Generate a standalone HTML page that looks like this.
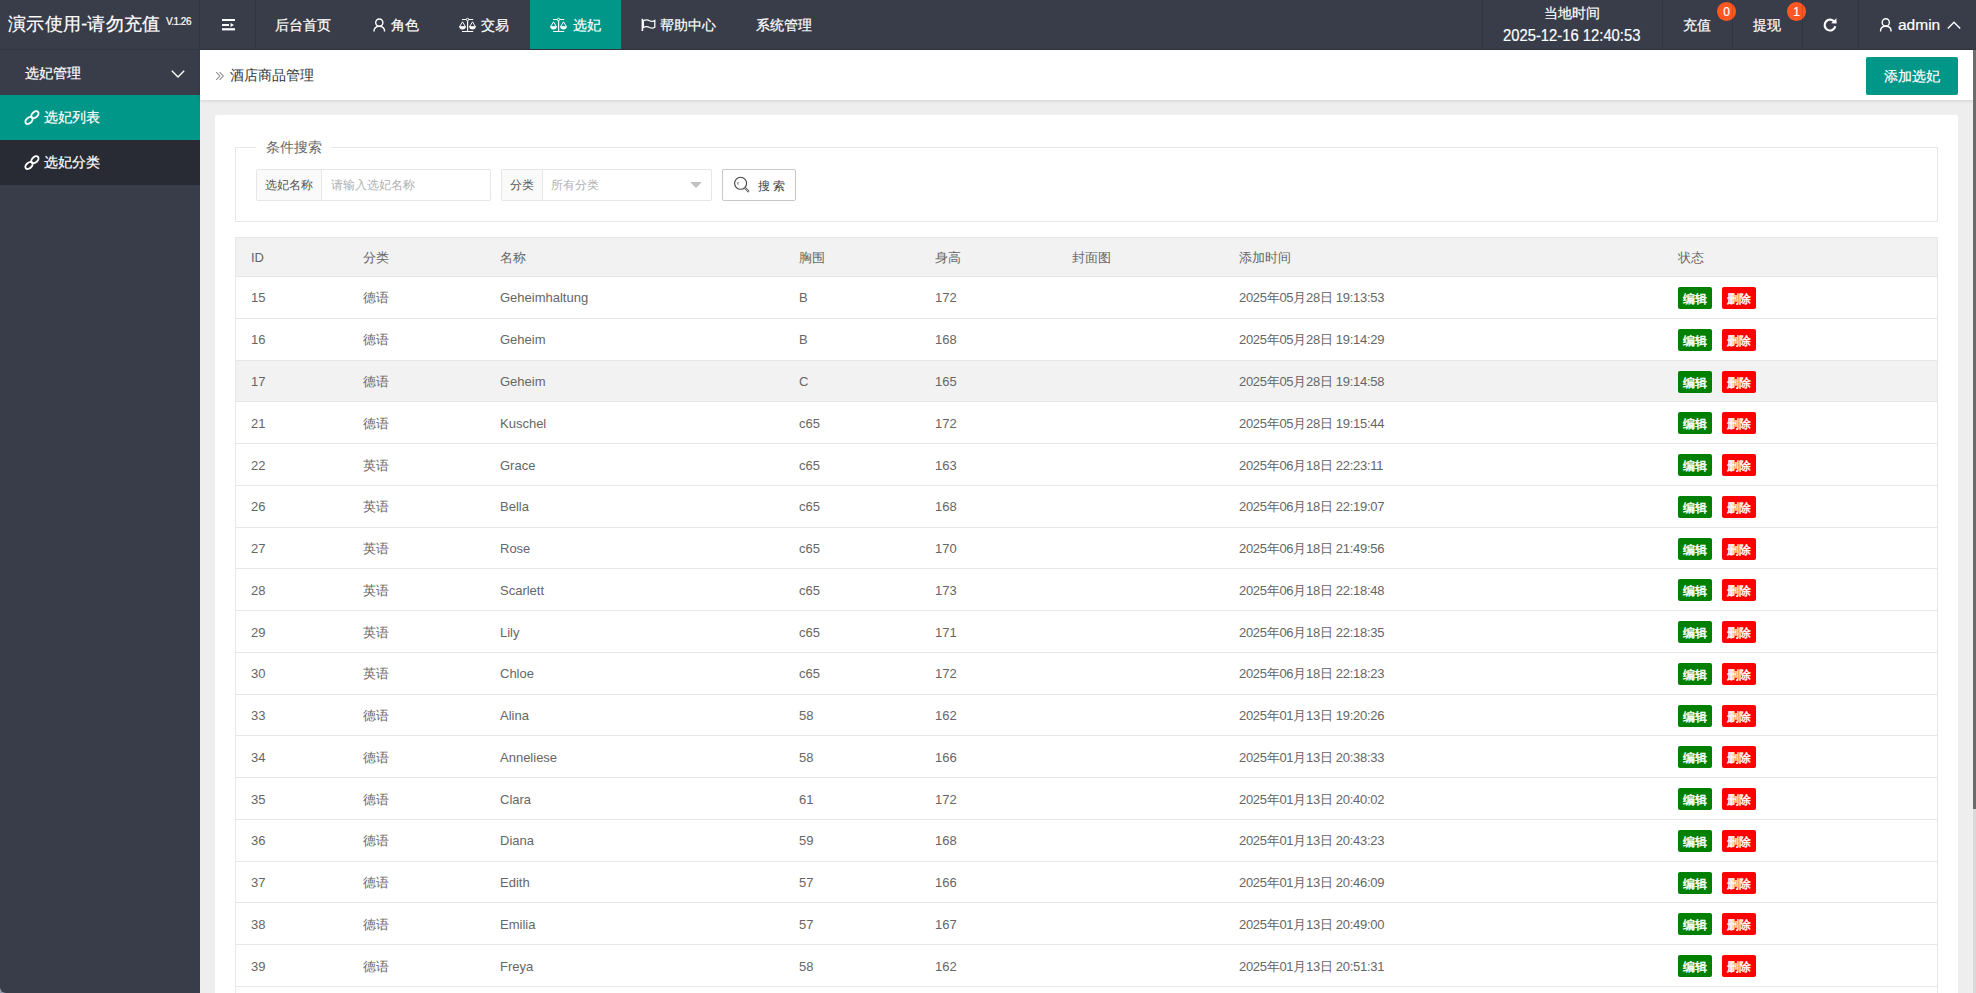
<!DOCTYPE html>
<html><head><meta charset="utf-8">
<style>
*{box-sizing:border-box;margin:0;padding:0}
html,body{width:1976px;height:993px;overflow:hidden}
body{font-family:"Liberation Sans",sans-serif;background:#EEEEEE;position:relative;color:#666}
.hdr{position:absolute;left:0;top:0;width:1976px;height:50px;background:#393D49;color:#fff}
.hdr .bl{position:absolute;left:0;top:49px;width:1976px;height:1px;background:#323641}
.vl{position:absolute;top:0;width:1px;height:49px;background:rgba(0,0,0,.13);z-index:3}
.logo{position:absolute;left:8px;top:12px;font-size:18px;color:#fff;white-space:nowrap;line-height:24px;letter-spacing:0.3px}
.logo sup{font-size:10px;position:absolute;top:2px;left:158px;letter-spacing:-0.5px;line-height:16px}
.nav{position:absolute;top:0;height:49px;font-size:14px;line-height:50px;white-space:nowrap;color:#fff}
.ni{position:absolute;top:0;height:50px;text-align:left}
.ni.act{background:#009688}
.side{position:absolute;left:0;top:50px;width:200px;height:943px;background:#393D49;color:#fff;font-size:14px;border-bottom-left-radius:6px}
.side .it{position:absolute;left:0;width:200px;height:45px;line-height:45px}
.main{position:absolute;left:200px;top:50px;width:1773px;height:943px;background:#EEEEEE}
.sb{position:absolute;left:1973px;top:50px;width:3px;height:943px;background:#D9D9D9}
.sbt{position:absolute;left:1973px;top:50px;width:3px;height:759px;background:#6B6B6B}
.crumb{position:absolute;left:0;top:0;width:1773px;height:50px;background:#fff;box-shadow:0 1px 3px rgba(0,0,0,.12)}
.card{position:absolute;left:15px;top:65px;width:1743px;height:900px;background:#fff;border-radius:2px}
.tm1{position:absolute;left:1544px;top:4px;font-size:14px;line-height:18px;color:#fff}
.tm2{position:absolute;left:1503px;top:26px;font-size:16px;line-height:20px;color:#fff;transform:scaleX(0.925);transform-origin:0 0;white-space:nowrap}
.rt{position:absolute;top:0;line-height:50px;font-size:14px;color:#fff;white-space:nowrap}
.badge{position:absolute;top:1.5px;width:19px;height:19px;border-radius:50%;background:#FF5722;color:#fff;font-size:12px;line-height:21px;text-align:center}
.raq{position:absolute;left:15px;top:15px;font-size:14px;color:#999;line-height:20px}
.ctext{position:absolute;left:30px;top:15px;font-size:14px;color:#333;line-height:20px}
.addbtn{position:absolute;left:1666px;top:7px;width:92px;height:38px;line-height:38px;text-align:center;background:#009688;color:#fff;font-size:14px;border-radius:2px}
.fs{position:absolute;left:235px;top:147px;width:1703px;height:75px;border:1px solid #E6E6E6}
.lg{position:absolute;left:20px;top:-11px;padding:0 10px;background:#fff;font-size:14px;line-height:20px;color:#666}
.ig{position:absolute;top:21px;height:32px;border:1px solid #E6E6E6;border-radius:2px;background:#fff}
.pre{position:absolute;left:0;top:0;height:30px;line-height:30px;background:#FAFAFA;border-right:1px solid #E6E6E6;font-size:12px;color:#555;text-align:center}
.ph{position:absolute;top:0;line-height:30px;font-size:12px;color:#B0B0B0}
.tri{position:absolute;right:9px;top:12px;width:0;height:0;border-left:6px solid transparent;border-right:6px solid transparent;border-top:6px solid #C2C2C2}
.sbtn{position:absolute;left:486px;top:21px;width:74px;height:32px;border:1px solid #C9C9C9;border-radius:2px;font-size:12px;line-height:30px;color:#444;background:#fff}
.tbl{position:absolute;left:235px;top:237px;width:1703px;height:760px;border-left:1px solid #E6E6E6;border-right:1px solid #E6E6E6;border-top:1px solid #E6E6E6}
.th{position:absolute;left:0;top:0;width:100%;height:39px;background:#F2F2F2;border-bottom:1px solid #E6E6E6}
.tr{position:absolute;left:0;width:100%;height:42px;border-bottom:1px solid #E6E6E6;background:#fff}
.tr.hov{background:#F2F2F2}
.c{position:absolute;top:0;line-height:40px;font-size:13px;color:#666;white-space:nowrap}
.tr .c{line-height:41px}
.dt{letter-spacing:-0.3px}
.tr.o1 .c{top:1px}
.btn{position:absolute;top:10px;width:34px;height:22px;line-height:24px;text-align:center;color:#fff;font-size:12px;border-radius:2px}
.btn.g{background:#008000}
.btn.r{background:#FF0000}
table{border-collapse:collapse}
.hdr .logo,.hdr .ni span,.hdr .ni,.rt,.tm1,.tm2,.side .it span,.addbtn,.btn,.badge{-webkit-text-stroke:0.2px currentColor}
.btn{-webkit-text-stroke:0.45px #fff}
</style></head><body>
<div class="hdr">
  <div class="logo">演示使用-请勿充值<sup>V.1.26</sup></div>
  <div class="vl" style="left:199px"></div>
  <svg style="position:absolute;left:220px;top:17px" width="18" height="16" viewBox="0 0 18 16"><rect x="2" y="2" width="13" height="2" fill="#fff"/><rect x="2" y="7" width="7" height="2" fill="#fff"/><path d="M10.5 6 L14 8 L10.5 10 Z" fill="#fff"/><rect x="2" y="11.2" width="13" height="2.2" fill="#fff"/></svg>
  <div class="vl" style="left:255px"></div>
  <div class="nav">
    <div class="ni" style="left:275px">后台首页</div>
    <div class="ni" style="left:371px"><svg class="ic" style="position:absolute;left:2px;top:18px" width="13" height="14" viewBox="0 0 13 14"><circle cx="6.3" cy="4.6" r="3.6" fill="none" stroke="#fff" stroke-width="1.4"/><path d="M1 13.6 C1 9.8 3.4 8.4 6.3 8.4 C9.2 8.4 11.6 9.8 11.6 13.6" fill="none" stroke="#fff" stroke-width="1.4"/></svg><span style="position:absolute;left:20px">角色</span></div>
    <div class="ni" style="left:459px"><svg style="position:absolute;left:-4px;top:14px" width="26" height="22" viewBox="0 0 26 22"><path d="M7 5.5 H18.2 M12.6 6.4 V17.4 M7 17.5 H18.2" stroke="#fff" stroke-width="1.15" fill="none"/><circle cx="12.5" cy="5.5" r="1.2" fill="#393D49" stroke="#fff" stroke-width="1"/><path d="M7.5 7.8 L4.5 12.8 H10.5 Z M17.5 7.8 L14.5 12.8 H20.5 Z" stroke="#fff" stroke-width="0.95" fill="none" stroke-linejoin="round"/><path d="M4.1 12.5 C4.3 14.6 5.6 15.4 7.5 15.4 C9.4 15.4 10.7 14.6 10.9 12.5 Z M14.1 12.5 C14.3 14.6 15.6 15.4 17.5 15.4 C19.4 15.4 20.7 14.6 20.9 12.5 Z" fill="#fff"/></svg><span style="position:absolute;left:22px">交易</span></div>
    <div class="ni act" style="left:530px;width:91px"><svg style="position:absolute;left:16px;top:14px" width="26" height="22" viewBox="0 0 26 22"><path d="M7 5.5 H18.2 M12.6 6.4 V17.4 M7 17.5 H18.2" stroke="#fff" stroke-width="1.15" fill="none"/><circle cx="12.5" cy="5.5" r="1.2" fill="#009688" stroke="#fff" stroke-width="1"/><path d="M7.5 7.8 L4.5 12.8 H10.5 Z M17.5 7.8 L14.5 12.8 H20.5 Z" stroke="#fff" stroke-width="0.95" fill="none" stroke-linejoin="round"/><path d="M4.1 12.5 C4.3 14.6 5.6 15.4 7.5 15.4 C9.4 15.4 10.7 14.6 10.9 12.5 Z M14.1 12.5 C14.3 14.6 15.6 15.4 17.5 15.4 C19.4 15.4 20.7 14.6 20.9 12.5 Z" fill="#fff"/></svg><span style="position:absolute;left:43px">选妃</span></div>
    <div class="ni" style="left:641px"><svg style="position:absolute;left:0;top:18px" width="16" height="14" viewBox="0 0 16 14"><path d="M1.4 0.8 V13" stroke="#fff" stroke-width="1.6"/><path d="M2.4 2.7 C4.5 1.5 6.8 1.7 8.6 2.7 C10.4 3.7 12.3 3.5 13.8 2.5 V9.3 C12.3 10.3 10.4 10.5 8.6 9.5 C6.8 8.5 4.5 8.4 2.4 9.5 Z" fill="none" stroke="#fff" stroke-width="1.25"/></svg><span style="position:absolute;left:19px">帮助中心</span></div>
    <div class="ni" style="left:756px">系统管理</div>
  </div>
  <div class="vl" style="left:1482px"></div>
  <div class="tm1">当地时间</div>
  <div class="tm2">2025-12-16 12:40:53</div>
  <div class="vl" style="left:1662px"></div>
  <div class="rt" style="left:1683px">充值</div>
  <div class="vl" style="left:1732px"></div>
  <div class="rt" style="left:1753px">提现</div>
  <div class="vl" style="left:1802px"></div>
  <svg style="position:absolute;left:1822px;top:17px" width="16" height="16" viewBox="0 0 16 16"><path d="M12.6 5.2 A5.4 5.4 0 1 0 13.3 9.2" fill="none" stroke="#fff" stroke-width="2.2"/><path d="M9.2 6.2 L14.6 6.6 L14.4 1.3 Z" fill="#fff"/></svg>
  <div class="vl" style="left:1858px"></div>
  <svg style="position:absolute;left:1879px;top:18px" width="14" height="14" viewBox="0 0 13 14"><circle cx="6.3" cy="4.4" r="3.6" fill="none" stroke="#fff" stroke-width="1.4"/><path d="M1 13.4 C1 9.8 3.4 8.3 6.3 8.3 C9.2 8.3 11.6 9.8 11.6 13.4" fill="none" stroke="#fff" stroke-width="1.4"/></svg>
  <div class="rt" style="left:1898px;font-size:15.5px;top:0">admin</div>
  <svg style="position:absolute;left:1946px;top:20px" width="16" height="10" viewBox="0 0 16 10"><path d="M1.8 8.4 L8 2.2 L14.2 8.4" fill="none" stroke="#fff" stroke-width="1.4"/></svg>
  <div class="badge" style="left:1717px">0</div>
  <div class="badge" style="left:1787px">1</div>
  <div class="bl"></div>
</div>
<div style="position:absolute;left:0;top:983px;width:10px;height:10px;background:#8F9BAC"></div>
<div class="side">
  <div class="it" style="top:0"><span style="position:absolute;left:25px;top:1px">选妃管理</span><svg style="position:absolute;left:170px;top:19px" width="16" height="10" viewBox="0 0 16 10"><path d="M1.8 1.8 L8 8 L14.2 1.8" fill="none" stroke="#fff" stroke-width="1.4"/></svg></div>
  <div class="it" style="top:45px;background:#009688"><svg style="position:absolute;left:24px;top:15px" width="17" height="17" viewBox="0 0 17 17"><g fill="none" stroke="#fff" stroke-width="1.9"><ellipse cx="10.9" cy="4.7" rx="4.2" ry="2.7" transform="rotate(-42 10.9 4.7)"/><ellipse cx="5" cy="10.5" rx="4.2" ry="2.7" transform="rotate(-42 5 10.5)"/></g></svg><span style="position:absolute;left:44px">选妃列表</span></div>
  <div class="it" style="top:90px;background:#282B33"><svg style="position:absolute;left:24px;top:15px" width="17" height="17" viewBox="0 0 17 17"><g fill="none" stroke="#fff" stroke-width="1.9"><ellipse cx="10.9" cy="4.7" rx="4.2" ry="2.7" transform="rotate(-42 10.9 4.7)"/><ellipse cx="5" cy="10.5" rx="4.2" ry="2.7" transform="rotate(-42 5 10.5)"/></g></svg><span style="position:absolute;left:44px">选妃分类</span></div>
</div>
<div class="main">
  <div class="crumb"><svg style="position:absolute;left:10px;top:14px" width="24" height="22" viewBox="0 0 24 22"><path d="M6.2 8.2 L9.9 12 L6.2 15.8 M9.6 8.2 L13.3 12 L9.6 15.8" fill="none" stroke="#8a8a8a" stroke-width="1.05"/></svg><span class="ctext">酒店商品管理</span><span class="addbtn">添加选妃</span></div>
  <div class="card"></div>
</div>
<div class="fs"><span class="lg">条件搜索</span>
  <div class="ig" style="left:20px;width:235px"><span class="pre" style="width:65px">选妃名称</span><span class="ph" style="left:74px">请输入选妃名称</span></div>
  <div class="ig" style="left:265px;width:211px"><span class="pre" style="width:41px">分类</span><span class="ph" style="left:49px">所有分类</span><span class="tri"></span></div>
  <div class="sbtn"><svg style="position:absolute;left:10px;top:6px" width="20" height="20" viewBox="0 0 20 20"><circle cx="7.6" cy="7.3" r="6" fill="none" stroke="#444" stroke-width="1.1"/><path d="M11.9 11.8 L15.3 15.3" stroke="#555" stroke-width="2.2" stroke-linecap="round"/><path d="M11.9 11.8 L15.3 15.3" stroke="#fff" stroke-width="0.7" stroke-linecap="round"/><path d="M5.2 6 A3 3 0 0 0 5.1 8.6" fill="none" stroke="#555" stroke-width="0.9"/></svg><span style="position:absolute;left:35px;top:1px">搜 索</span></div>
</div>
<div class="tbl">
  <div class="th"><span class="c" style="left:15px">ID</span><span class="c" style="left:127px">分类</span><span class="c" style="left:264px">名称</span><span class="c" style="left:563px">胸围</span><span class="c" style="left:699px">身高</span><span class="c" style="left:836px">封面图</span><span class="c" style="left:1003px">添加时间</span><span class="c" style="left:1442px">状态</span></div>
<div class="tr" style="top:39px;height:42px"><span class="c" style="left:15px">15</span><span class="c" style="left:127px">德语</span><span class="c" style="left:264px">Geheimhaltung</span><span class="c" style="left:563px">B</span><span class="c" style="left:699px">172</span><span class="c" style="left:836px"></span><span class="c dt" style="left:1003px">2025年05月28日 19:13:53</span><span class="btn g" style="left:1442px">编辑</span><span class="btn r" style="left:1486px">删除</span></div>
<div class="tr" style="top:81px;height:42px"><span class="c" style="left:15px">16</span><span class="c" style="left:127px">德语</span><span class="c" style="left:264px">Geheim</span><span class="c" style="left:563px">B</span><span class="c" style="left:699px">168</span><span class="c" style="left:836px"></span><span class="c dt" style="left:1003px">2025年05月28日 19:14:29</span><span class="btn g" style="left:1442px">编辑</span><span class="btn r" style="left:1486px">删除</span></div>
<div class="tr hov" style="top:123px;height:41px"><span class="c" style="left:15px">17</span><span class="c" style="left:127px">德语</span><span class="c" style="left:264px">Geheim</span><span class="c" style="left:563px">C</span><span class="c" style="left:699px">165</span><span class="c" style="left:836px"></span><span class="c dt" style="left:1003px">2025年05月28日 19:14:58</span><span class="btn g" style="left:1442px">编辑</span><span class="btn r" style="left:1486px">删除</span></div>
<div class="tr o1" style="top:164px;height:42px"><span class="c" style="left:15px">21</span><span class="c" style="left:127px">德语</span><span class="c" style="left:264px">Kuschel</span><span class="c" style="left:563px">c65</span><span class="c" style="left:699px">172</span><span class="c" style="left:836px"></span><span class="c dt" style="left:1003px">2025年05月28日 19:15:44</span><span class="btn g" style="left:1442px">编辑</span><span class="btn r" style="left:1486px">删除</span></div>
<div class="tr o1" style="top:206px;height:42px"><span class="c" style="left:15px">22</span><span class="c" style="left:127px">英语</span><span class="c" style="left:264px">Grace</span><span class="c" style="left:563px">c65</span><span class="c" style="left:699px">163</span><span class="c" style="left:836px"></span><span class="c dt" style="left:1003px">2025年06月18日 22:23:11</span><span class="btn g" style="left:1442px">编辑</span><span class="btn r" style="left:1486px">删除</span></div>
<div class="tr" style="top:248px;height:42px"><span class="c" style="left:15px">26</span><span class="c" style="left:127px">英语</span><span class="c" style="left:264px">Bella</span><span class="c" style="left:563px">c65</span><span class="c" style="left:699px">168</span><span class="c" style="left:836px"></span><span class="c dt" style="left:1003px">2025年06月18日 22:19:07</span><span class="btn g" style="left:1442px">编辑</span><span class="btn r" style="left:1486px">删除</span></div>
<div class="tr" style="top:290px;height:41px"><span class="c" style="left:15px">27</span><span class="c" style="left:127px">英语</span><span class="c" style="left:264px">Rose</span><span class="c" style="left:563px">c65</span><span class="c" style="left:699px">170</span><span class="c" style="left:836px"></span><span class="c dt" style="left:1003px">2025年06月18日 21:49:56</span><span class="btn g" style="left:1442px">编辑</span><span class="btn r" style="left:1486px">删除</span></div>
<div class="tr o1" style="top:331px;height:42px"><span class="c" style="left:15px">28</span><span class="c" style="left:127px">英语</span><span class="c" style="left:264px">Scarlett</span><span class="c" style="left:563px">c65</span><span class="c" style="left:699px">173</span><span class="c" style="left:836px"></span><span class="c dt" style="left:1003px">2025年06月18日 22:18:48</span><span class="btn g" style="left:1442px">编辑</span><span class="btn r" style="left:1486px">删除</span></div>
<div class="tr o1" style="top:373px;height:42px"><span class="c" style="left:15px">29</span><span class="c" style="left:127px">英语</span><span class="c" style="left:264px">Lily</span><span class="c" style="left:563px">c65</span><span class="c" style="left:699px">171</span><span class="c" style="left:836px"></span><span class="c dt" style="left:1003px">2025年06月18日 22:18:35</span><span class="btn g" style="left:1442px">编辑</span><span class="btn r" style="left:1486px">删除</span></div>
<div class="tr" style="top:415px;height:42px"><span class="c" style="left:15px">30</span><span class="c" style="left:127px">英语</span><span class="c" style="left:264px">Chloe</span><span class="c" style="left:563px">c65</span><span class="c" style="left:699px">172</span><span class="c" style="left:836px"></span><span class="c dt" style="left:1003px">2025年06月18日 22:18:23</span><span class="btn g" style="left:1442px">编辑</span><span class="btn r" style="left:1486px">删除</span></div>
<div class="tr" style="top:457px;height:41px"><span class="c" style="left:15px">33</span><span class="c" style="left:127px">德语</span><span class="c" style="left:264px">Alina</span><span class="c" style="left:563px">58</span><span class="c" style="left:699px">162</span><span class="c" style="left:836px"></span><span class="c dt" style="left:1003px">2025年01月13日 19:20:26</span><span class="btn g" style="left:1442px">编辑</span><span class="btn r" style="left:1486px">删除</span></div>
<div class="tr o1" style="top:498px;height:42px"><span class="c" style="left:15px">34</span><span class="c" style="left:127px">德语</span><span class="c" style="left:264px">Anneliese</span><span class="c" style="left:563px">58</span><span class="c" style="left:699px">166</span><span class="c" style="left:836px"></span><span class="c dt" style="left:1003px">2025年01月13日 20:38:33</span><span class="btn g" style="left:1442px">编辑</span><span class="btn r" style="left:1486px">删除</span></div>
<div class="tr o1" style="top:540px;height:42px"><span class="c" style="left:15px">35</span><span class="c" style="left:127px">德语</span><span class="c" style="left:264px">Clara</span><span class="c" style="left:563px">61</span><span class="c" style="left:699px">172</span><span class="c" style="left:836px"></span><span class="c dt" style="left:1003px">2025年01月13日 20:40:02</span><span class="btn g" style="left:1442px">编辑</span><span class="btn r" style="left:1486px">删除</span></div>
<div class="tr" style="top:582px;height:42px"><span class="c" style="left:15px">36</span><span class="c" style="left:127px">德语</span><span class="c" style="left:264px">Diana</span><span class="c" style="left:563px">59</span><span class="c" style="left:699px">168</span><span class="c" style="left:836px"></span><span class="c dt" style="left:1003px">2025年01月13日 20:43:23</span><span class="btn g" style="left:1442px">编辑</span><span class="btn r" style="left:1486px">删除</span></div>
<div class="tr" style="top:624px;height:41px"><span class="c" style="left:15px">37</span><span class="c" style="left:127px">德语</span><span class="c" style="left:264px">Edith</span><span class="c" style="left:563px">57</span><span class="c" style="left:699px">166</span><span class="c" style="left:836px"></span><span class="c dt" style="left:1003px">2025年01月13日 20:46:09</span><span class="btn g" style="left:1442px">编辑</span><span class="btn r" style="left:1486px">删除</span></div>
<div class="tr o1" style="top:665px;height:42px"><span class="c" style="left:15px">38</span><span class="c" style="left:127px">德语</span><span class="c" style="left:264px">Emilia</span><span class="c" style="left:563px">57</span><span class="c" style="left:699px">167</span><span class="c" style="left:836px"></span><span class="c dt" style="left:1003px">2025年01月13日 20:49:00</span><span class="btn g" style="left:1442px">编辑</span><span class="btn r" style="left:1486px">删除</span></div>
<div class="tr o1" style="top:707px;height:42px"><span class="c" style="left:15px">39</span><span class="c" style="left:127px">德语</span><span class="c" style="left:264px">Freya</span><span class="c" style="left:563px">58</span><span class="c" style="left:699px">162</span><span class="c" style="left:836px"></span><span class="c dt" style="left:1003px">2025年01月13日 20:51:31</span><span class="btn g" style="left:1442px">编辑</span><span class="btn r" style="left:1486px">删除</span></div>
<div class="tr" style="top:749px;height:42px"><span class="c" style="left:15px">40</span><span class="c" style="left:127px">德语</span><span class="c" style="left:264px">Greta</span><span class="c" style="left:563px">58</span><span class="c" style="left:699px">165</span><span class="c" style="left:836px"></span><span class="c dt" style="left:1003px">2025年01月13日 20:55:12</span><span class="btn g" style="left:1442px">编辑</span><span class="btn r" style="left:1486px">删除</span></div>
</div>
<div class="sb"></div><div class="sbt"></div>
</body></html>
